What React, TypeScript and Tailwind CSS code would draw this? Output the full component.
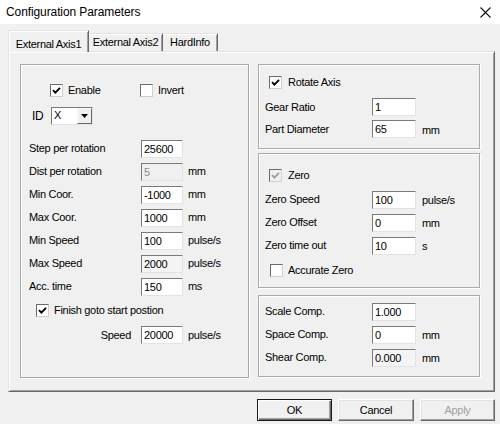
import React from "react";

const Check = ({ checked = false, disabled = false }: { checked?: boolean; disabled?: boolean }) => (
  <span
    className={`flex h-[13px] w-[13px] shrink-0 items-center justify-center border border-t-[#6b6b6b] border-l-[#6b6b6b] border-r-[#cfcfcf] border-b-[#cfcfcf] ${
      disabled ? "bg-[#f0f0f0]" : "bg-white"
    }`}
  >
    {checked && (
      <svg width="9" height="9" viewBox="0 0 9 9">
        <path
          d="M1 4.2 L3.4 6.6 L8 1.8"
          fill="none"
          stroke={disabled ? "#a0a0a0" : "#000"}
          strokeWidth="1.9"
        />
      </svg>
    )}
  </span>
);

const Box = ({ value, disabled = false, grey = false, w = 42 }: { value: string; disabled?: boolean; grey?: boolean; w?: number }) => (
  <input
    readOnly
    value={value}
    style={{ width: w }}
    className={`h-[18px] shrink-0 border border-t-[#7a7a7a] border-l-[#7a7a7a] border-r-[#e3e3e3] border-b-[#e3e3e3] pl-[2px] text-[11px] outline-none ${
      disabled ? "bg-[#f0f0f0] text-[#8d8d8d]" : grey ? "bg-[#f4f4f4] text-black" : "bg-white text-black"
    }`}
  />
);

const LeftRow = ({ label, value, unit, disabled, grey }: { label: string; value: string; unit?: string; disabled?: boolean; grey?: boolean }) => (
  <div className="flex h-[23px] items-center">
    <span className="w-[112px]">{label}</span>
    <Box value={value} disabled={disabled} grey={grey} />
    {unit && <span className="ml-[5px]">{unit}</span>}
  </div>
);

const RightRow = ({ label, value, unit, grey, h = 23 }: { label: string; value: string; unit?: string; grey?: boolean; h?: number }) => (
  <div className="flex items-center" style={{ height: h }}>
    <span className="w-[107px]">{label}</span>
    <Box value={value} grey={grey} w={44} />
    {unit && <span className="ml-[6px] mt-[2px]">{unit}</span>}
  </div>
);

const Group = ({ className, children }: { className: string; children: React.ReactNode }) => (
  <div className={`border border-[#aaaaaa] shadow-[1px_1px_0_#ffffff,inset_1px_1px_0_#ffffff] ${className}`}>
    {children}
  </div>
);

export default function App() {
  return (
    <div
      className="flex h-[424px] w-[500px] flex-col overflow-hidden bg-[#f0f0f0] text-[11px] tracking-[-0.3px] text-black"
      style={{ fontFamily: '"Liberation Sans", Arial, sans-serif' }}
    >
      {/* title bar */}
      <div className="flex h-[24px] shrink-0 items-center justify-between bg-white pl-[6px] pr-[8px]">
        <span className="text-[12px] tracking-[-0.1px]">Configuration Parameters</span>
        <svg width="11" height="11" viewBox="0 0 11 11" className="mr-[1px]">
          <path d="M0.5 0.5 L10.5 10.5 M10.5 0.5 L0.5 10.5" stroke="#111" strokeWidth="1.1" />
        </svg>
      </div>

      {/* tabs */}
      <div className="flex h-[27px] shrink-0 items-end pl-[8px]">
        <div className="relative z-10 -mb-px flex h-[22px] w-[81px] items-start justify-center border-t border-l border-r border-t-[#e3e3e3] border-l-[#e3e3e3] border-r-[#696969] bg-[#f0f0f0] pt-[5px] shadow-[inset_1px_1px_0_#ffffff,inset_-1px_0_0_#a0a0a0]">
          External Axis1
        </div>
        <div className="flex h-[18px] w-[74px] items-center justify-center border-t border-r border-t-[#e3e3e3] border-r-[#696969] shadow-[inset_0_1px_0_#ffffff,inset_-1px_0_0_#a0a0a0]">
          External Axis2
        </div>
        <div className="flex h-[18px] w-[55px] items-center justify-center border-t border-r border-t-[#e3e3e3] border-r-[#696969] shadow-[inset_0_1px_0_#ffffff,inset_-1px_0_0_#a0a0a0]">
          HardInfo
        </div>
      </div>

      {/* tab panel */}
      <div className="mx-[8px] flex h-[341px] w-[487px] shrink-0 gap-[9px] border border-t-[#e3e3e3] border-l-[#e3e3e3] border-r-[#696969] border-b-[#696969] pl-[11px] pt-[12px] shadow-[inset_1px_1px_0_#ffffff,inset_-1px_-1px_0_#a0a0a0]">
        {/* left group */}
        <Group className="flex h-[314px] w-[229px] flex-col pl-[8px] pt-[17px]">
          <div className="flex h-[16px] items-center">
            <div className="ml-[21px] flex w-[90px] items-center gap-[5px]">
              <Check checked />
              <span>Enable</span>
            </div>
            <div className="flex items-center gap-[5px]">
              <Check />
              <span>Invert</span>
            </div>
          </div>
          <div className="mt-[8px] flex h-[20px] items-center">
            <span className="ml-[3px] w-[19px] text-[12px]">ID</span>
            <div className="flex h-[18px] w-[42px] border border-t-[#7a7a7a] border-l-[#7a7a7a] border-r-[#e3e3e3] border-b-[#e3e3e3] bg-white">
              <span className="flex-1 pl-[2px] leading-[15px]">X</span>
              <span className="flex h-[16px] w-[15px] items-center justify-center border border-t-[#f8f8f8] border-l-[#f8f8f8] border-r-[#696969] border-b-[#696969] bg-[#f0f0f0]">
                <svg width="7" height="4" viewBox="0 0 7 4">
                  <path d="M0 0 H7 L3.5 4 Z" fill="#000" />
                </svg>
              </span>
            </div>
          </div>
          <div className="mt-[11px] flex flex-col">
            <LeftRow label="Step per rotation" value="25600" />
            <LeftRow label="Dist per rotation" value="5" unit="mm" disabled />
            <LeftRow label="Min Coor." value="-1000" unit="mm" />
            <LeftRow label="Max Coor." value="1000" unit="mm" />
            <LeftRow label="Min Speed" value="100" unit="pulse/s" />
            <LeftRow label="Max Speed" value="2000" unit="pulse/s" grey />
            <LeftRow label="Acc. time" value="150" unit="ms" />
          </div>
          <div className="mt-[4px] flex h-[16px] items-center gap-[5px] pl-[7px]">
            <Check checked />
            <span>Finish goto start postion</span>
          </div>
          <div className="mt-[7px] flex h-[20px] items-center">
            <span className="w-[112px] pr-[10px] text-right">Speed</span>
            <Box value="20000" />
            <span className="ml-[5px]">pulse/s</span>
          </div>
        </Group>

        {/* right column */}
        <div className="flex w-[222px] flex-col">
          <Group className="flex h-[85px] flex-col pl-[6px] pt-[9px]">
            <div className="ml-[4px] flex h-[16px] items-center gap-[6px]">
              <Check checked />
              <span>Rotate Axis</span>
            </div>
            <div className="mt-[6px]">
              <RightRow label="Gear Ratio" value="1" h={22} />
              <RightRow label="Part Diameter" value="65" unit="mm" h={22} />
            </div>
          </Group>

          <Group className="mt-[4px] flex h-[135px] flex-col pl-[6px] pt-[13px]">
            <div className="ml-[4px] flex h-[16px] items-center gap-[6px]">
              <Check checked disabled />
              <span>Zero</span>
            </div>
            <div className="mt-[5px]">
              <RightRow label="Zero Speed" value="100" unit="pulse/s" />
              <RightRow label="Zero Offset" value="0" unit="mm" />
              <RightRow label="Zero time out" value="10" unit="s" />
            </div>
            <div className="ml-[5px] mt-[5px] flex h-[16px] items-center gap-[5px]">
              <Check />
              <span>Accurate Zero</span>
            </div>
          </Group>

          <Group className="mt-[7px] flex h-[82px] flex-col pl-[6px] pt-[4px]">
            <RightRow label="Scale Comp." value="1.000" />
            <RightRow label="Space Comp." value="0" unit="mm" />
            <RightRow label="Shear Comp." value="0.000" unit="mm" grey />
          </Group>
        </div>
      </div>

      {/* buttons */}
      <div className="flex justify-end gap-[6px] pr-[5px] pt-[7px]">
        <button className="flex h-[22px] w-[75px] items-center justify-center border border-[#1a1a1a] bg-[#f0f0f0] shadow-[inset_1px_1px_0_#ffffff,inset_-1px_-1px_0_#696969,inset_-2px_-2px_0_#a0a0a0]">
          OK
        </button>
        <button className="flex h-[22px] w-[76px] items-center justify-center border border-t-[#ffffff] border-l-[#ffffff] border-r-[#696969] border-b-[#696969] bg-[#f0f0f0] shadow-[inset_-1px_-1px_0_#a0a0a0,inset_1px_1px_0_#e3e3e3]">
          Cancel
        </button>
        <button className="flex h-[22px] w-[75px] items-center justify-center border border-t-[#ffffff] border-l-[#ffffff] border-r-[#696969] border-b-[#696969] bg-[#f0f0f0] text-[#a0a0a0] shadow-[inset_-1px_-1px_0_#a0a0a0,inset_1px_1px_0_#e3e3e3]">
          Apply
        </button>
      </div>
    </div>
  );
}
